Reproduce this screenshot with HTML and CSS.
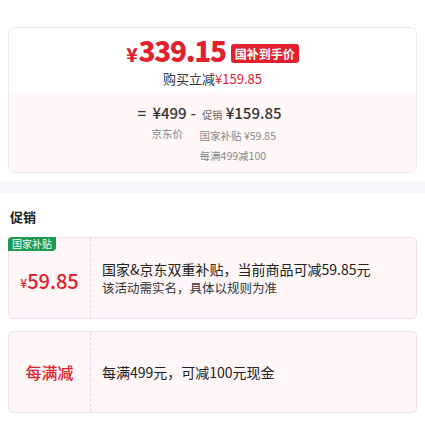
FILE: index.html
```html
<!DOCTYPE html>
<html lang="zh-CN">
<head>
<meta charset="UTF-8">
<meta name="viewport" content="width=device-width, initial-scale=1.0">
<title>价格详情</title>
<link rel="stylesheet" href="styles.css">
</head>
<body>
    <div class="summary">
        <div class="summary-top">
            <div class="final">
                <span class="final-price"><span class="yen">¥</span>339.15</span>
                <span class="final-tag">国补到手价</span>
            </div>
            <div class="saved">购买立减<span class="red">¥159.85</span></div>
        </div>
        <div class="summary-detail">
            <div class="formula">
                <div class="term">
                    <div class="term-main"><span class="op">=</span> ¥499</div>
                    <div class="term-sub jd">京东价</div>
                </div>
                <div class="term">
                    <div class="term-main"><span class="op">-</span> <span class="small">促销</span> ¥159.85</div>
                    <div class="term-sub">国家补贴 ¥59.85</div>
                    <div class="term-sub">每满499减100</div>
                </div>
            </div>
        </div>
    </div>

    <div class="band"></div>

    <div class="promo">
        <h3 class="promo-title">促销</h3>

        <div class="promo-card">
            <span class="promo-badge">国家补贴</span>
            <div class="promo-left"><span class="yen-s">¥</span>59.85</div>
            <div class="promo-right">
                <div class="promo-text">国家&amp;京东双重补贴，当前商品可减59.85元</div>
                <div class="promo-note">该活动需实名，具体以规则为准</div>
            </div>
        </div>

        <div class="promo-card">
            <div class="promo-left label">每满减</div>
            <div class="promo-right">
                <div class="promo-text">每满499元，可减100元现金</div>
            </div>
        </div>
    </div>
</body>
</html>
```

FILE: styles.css
```css
*{
    margin: 0;
    padding: 0;
    box-sizing: border-box;
}
body{
    background-color: #fff;
    font-family: "Noto Sans CJK SC", "Noto Sans", sans-serif;
    color: #333;
}
.red{
    color: #e3202e;
}

/* top price card */
.summary{
    margin: 27px 8px 0;
    border: 1px solid #f1e7e9;
    border-radius: 7px;
    overflow: hidden;
}
.summary-top{
    height: 65px;
    padding-top: 6px;
    text-align: center;
}
.final{
    display: flex;
    justify-content: center;
    align-items: center;
    gap: 5px;
    height: 36px;
}
.final-price{
    color: #e3202e;
    font-size: 28px;
    font-weight: 900;
    letter-spacing: -1.3px;
    line-height: 36px;
}
.yen{
    font-size: 19px;
    margin-right: 2px;
}
.final-tag{
    background-color: #e3202e;
    color: #fff;
    font-size: 12px;
    font-weight: 700;
    line-height: 19px;
    padding: 0 4px;
    border-radius: 3px;
    margin-top: 3px;
}
.saved{
    font-size: 13px;
    line-height: 18px;
}
.summary-detail{
    position: relative;
    height: 79px;
    background-color: #fff7f8;
    padding-top: 9px;
}
.summary-detail::before{
    content: "";
    position: absolute;
    top: -4px;
    left: 200px;
    border-left: 4px solid transparent;
    border-right: 4px solid transparent;
    border-bottom: 4px solid #fff7f8;
}
.formula{
    display: flex;
    justify-content: center;
    gap: 4px;
    margin-left: -6px;
}
.term-main{
    font-size: 15px;
    font-weight: 500;
    line-height: 22px;
    color: #333;
}
.op{
    margin-right: 3px;
}
.small{
    font-size: 10px;
    font-weight: 400;
    color: #666;
}
.term-sub{
    font-size: 10.5px;
    color: #888;
    line-height: 20px;
}
.term:last-child .term-sub{
    padding-left: 9px;
}
.jd{
    padding-left: 14px;
}

.band{
    height: 12px;
    margin-top: 8px;
    background-color: #f6f6fa;
}

/* promotions */
.promo{
    padding: 0 8px;
}
.promo-title{
    font-size: 13px;
    font-weight: 700;
    line-height: 20px;
    margin: 14px 0 10px 2px;
    color: #222;
}
.promo-card{
    position: relative;
    display: flex;
    height: 82px;
    margin-bottom: 12px;
    background-color: #fff6f7;
    border: 1px solid #f2e1e4;
    border-radius: 5px;
}
.promo-badge{
    position: absolute;
    top: -1px;
    left: -1px;
    background-color: #1c9a4f;
    color: #fff;
    font-size: 10px;
    line-height: 14px;
    padding: 0 4px;
    border-radius: 4px 0 4px 0;
}
.promo-left{
    width: 82px;
    display: flex;
    justify-content: center;
    align-items: center;
    border-right: 1px dashed #e9d3d7;
    color: #e3202e;
    font-size: 20px;
    font-weight: 500;
    padding-top: 4px;
}
.yen-s{
    font-size: 12px;
    margin-top: 5px;
}
.promo-left.label{
    font-size: 16px;
    font-weight: 500;
    padding-top: 0;
}
.promo-right{
    flex: 1;
    display: flex;
    flex-direction: column;
    justify-content: center;
    gap: 1px;
    padding-left: 11px;
}
.promo-text{
    font-size: 14px;
    line-height: 18px;
    color: #222;
}
.promo-note{
    font-size: 12.5px;
    line-height: 18px;
    color: #333;
}
```
